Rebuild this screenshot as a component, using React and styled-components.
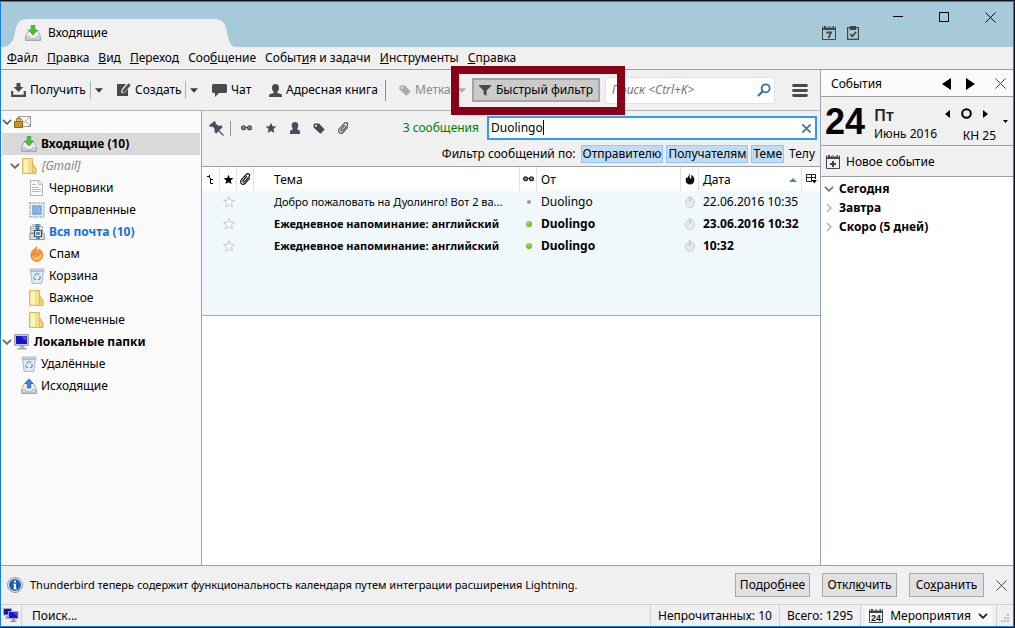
import React from "react";
import styled, { createGlobalStyle } from "styled-components";

const Global = createGlobalStyle`
  *, *::before, *::after { box-sizing: border-box; }
  body { margin: 0; background: #000; }
  body, button, input, select, table {
    font-family: "Noto Sans", "Open Sans", sans-serif;
    font-size: 12px;
    line-height: 16px;
    color: #000;
  }
  button { background: none; border: 0; padding: 0; margin: 0; cursor: default; white-space: nowrap; }
  svg { display: block; flex: none; }
  ul { list-style: none; margin: 0; padding: 0; }
  h2, p { margin: 0; font-size: inherit; font-weight: inherit; }
`;

/* ---------- window ---------- */
const Desktop = styled.div`
  min-height: 100vh;
  padding: 1px 1px 1px 0;
  display: flex;
  background: #14151a;
`;
const Window = styled.div`
  flex: 1;
  min-width: 0;
  display: flex;
  flex-direction: column;
  border: 1px solid #1a7fd6;
  background: #f0f0f0;
`;
const TitleBar = styled.header`
  display: flex;
  justify-content: space-between;
  align-items: flex-end;
  height: 45px;
  background: #a7cadb;
`;
const Tab = styled.div`
  position: relative;
  display: flex;
  width: 236px;
  height: 28px;
`;
const TabShape = styled.svg`
  position: absolute;
  inset: 0;
`;
const TabButton = styled.button`
  position: relative;
  display: flex;
  align-items: center;
  gap: 7px;
  padding: 0 24px;
`;
const TitleTools = styled.div`
  align-self: stretch;
  display: flex;
  align-items: flex-end;
  gap: 16px;
`;
const TabTools = styled.div`
  display: flex;
  gap: 11px;
  padding-bottom: 7px;
`;
const WindowControls = styled.div`
  align-self: flex-start;
  display: flex;
`;
const WindowControl = styled.button`
  width: 46px;
  height: 30px;
  display: flex;
  align-items: center;
  justify-content: center;
`;
const MenuBar = styled.nav`
  display: flex;
  gap: 9px;
  height: 23px;
  padding: 0 6px;
  align-items: center;
  border-bottom: 1px solid #9d9d9d;
`;

/* ---------- main split ---------- */
const Main = styled.div`
  flex: 1;
  display: flex;
`;
const MailArea = styled.div`
  flex: 1;
  min-width: 0;
  display: flex;
  flex-direction: column;
`;
const ToolBar = styled.div`
  display: flex;
  align-items: center;
  height: 41px;
  padding-left: 10px;
  padding-right: 12px;
  border-bottom: 1px solid #b4b4b4;
`;
const ToolButton = styled.button`
  flex: none;
  display: flex;
  align-items: center;
  gap: 4px;
  width: ${(p) => p.$width}px;
  color: ${(p) => (p.$dim ? "#8a8a8a" : "#000")};
`;
const DropButton = styled.button`
  flex: none;
  width: ${(p) => (p.$plain ? 19 : 27)}px;
  height: 18px;
  padding-left: 4px;
  border-left: 1px solid ${(p) => (p.$plain ? "transparent" : "#b0b0b0")};
`;
const ToolDivider = styled.span`
  flex: none;
  width: 1px;
  height: 21px;
  background: #8c8c8c;
  margin-right: 13px;
`;
const Highlight = styled.div`
  position: relative;
  flex: none;
  margin-right: 5px;
  &::after {
    content: "";
    position: absolute;
    z-index: 2;
    inset: -12px -25px -13px -21px;
    border: 8px solid #880015;
    pointer-events: none;
  }
`;
const QuickFilter = styled.button`
  display: flex;
  align-items: center;
  justify-content: center;
  gap: 5px;
  width: 128px;
  height: 24px;
  border: 2px solid #a5a5a5;
  background: #cbcbcb;
`;
const SearchBox = styled.label`
  flex: 1;
  min-width: 0;
  display: flex;
  align-items: center;
  height: 27px;
  padding: 0 3px 0 6px;
  background: #fff;
  border: 1px solid #e2e2e2;
`;
const SearchInput = styled.input`
  flex: 1;
  min-width: 0;
  border: 0;
  outline: 0;
  padding: 0;
  background: none;
  &::placeholder { color: #757575; font-style: italic; opacity: 1; }
`;
const MenuButton = styled.button`
  flex: none;
  margin-left: 17px;
`;
const Panes = styled.div`
  flex: 1;
  display: flex;
`;

/* ---------- folders ---------- */
const FolderPane = styled.aside`
  flex: none;
  width: 201px;
  border-right: 1px solid #98a6b8;
  background: #fafafa;
  padding: 0 1px;
`;
const FolderRow = styled.li`
  display: flex;
  align-items: center;
  height: 22px;
  padding-left: ${(p) => p.$indent}px;
  background: ${(p) => (p.$selected ? "#d9d9d9" : "none")};
`;
const Twisty = styled.span`
  width: 12px;
  display: flex;
`;
const FolderName = styled.span`
  margin-left: 4px;
  white-space: nowrap;
  font-weight: ${(p) => (p.$bold ? 700 : 400)};
  font-style: ${(p) => (p.$italic ? "italic" : "normal")};
  color: ${(p) => p.$color || "#000"};
`;

/* ---------- messages ---------- */
const MessagePane = styled.section`
  flex: 1;
  min-width: 0;
  display: flex;
  flex-direction: column;
  background: #fff;
`;
const FilterBar = styled.div`
  background: #f0f0f0;
  border-bottom: 1px solid #9d9d9d;
  padding: 4px 3px 0 7px;
  height: 56px;
`;
const FilterRow = styled.div`
  display: flex;
  align-items: center;
  height: 26px;
`;
const FilterIcons = styled.div`
  display: flex;
  align-items: center;
  gap: 13px;
  flex: 1;
`;
const FilterIcon = styled.button`
  display: flex;
`;
const FilterSeparator = styled.span`
  width: 1px;
  height: 15px;
  margin: 0 -3px 0 -7px;
  background: #999;
`;
const ResultCount = styled.span`
  color: #008000;
  margin-right: 8px;
`;
const FilterField = styled.div`
  position: relative;
  display: flex;
  align-items: center;
  width: 330px;
  height: 24px;
  border: 2px solid #3399ff;
  background: #fff;
  padding-right: 4px;
`;
const FilterInput = styled.input`
  flex: 1;
  min-width: 0;
  border: 0;
  outline: 0;
  padding: 0 0 0 2px;
  background: none;
`;
const Caret = styled.span`
  position: absolute;
  left: 54px;
  top: 2px;
  width: 1px;
  height: 15px;
  background: #000;
`;
const ScopeRow = styled.div`
  display: flex;
  align-items: center;
  justify-content: flex-end;
  gap: 3px;
  height: 26px;
`;
const ScopeLabel = styled.span`
  margin-right: 2px;
`;
const Scope = styled.button`
  height: 18px;
  line-height: 16px;
  padding: 0 1px;
  border: 1px solid ${(p) => (p.$on ? "#90c8f6" : "transparent")};
  background: ${(p) => (p.$on ? "#bfdcf3" : "none")};
`;
const ThreadList = styled.div`
  height: 149px;
  background: #f0f8fc;
  border-bottom: 1px solid #98b0c4;
`;
const Table = styled.table`
  width: 100%;
  table-layout: fixed;
  border-collapse: separate;
  border-spacing: 0;
`;
const Th = styled.th`
  height: 24px;
  padding: ${(p) => (p.$pad ? 2 : 0)}px 0 0 ${(p) => p.$pad || 0}px;
  text-align: left;
  font-weight: 400;
  background: #fff;
  border-right: ${(p) => (p.$last ? "0" : "1px solid #e2e2e2")};
`;
const IconCell = styled.span`
  display: flex;
  justify-content: center;
`;
const ThLabel = styled.span`
  display: flex;
  align-items: center;
  justify-content: space-between;
  padding-right: 4px;
`;
const Tr = styled.tr`
  font-weight: ${(p) => (p.$unread ? 700 : 400)};
`;
const Td = styled.td`
  height: 22px;
  padding: 0 0 0 ${(p) => p.$pad || 0}px;
  white-space: nowrap;
  font-size: ${(p) => (p.$small ? 11 : 12)}px;
`;
const Dot = styled.span`
  display: block;
  margin: 0 auto;
  width: ${(p) => (p.$unread ? 6 : 4)}px;
  height: ${(p) => (p.$unread ? 6 : 4)}px;
  border-radius: 50%;
  background: ${(p) => (p.$unread ? "radial-gradient(circle at 40% 30%, #a6e04a, #4fa40c)" : "#999")};
`;

/* ---------- calendar ---------- */
const EventsPane = styled.aside`
  flex: none;
  width: 193px;
  display: flex;
  flex-direction: column;
  border-left: 1px solid #98a6b8;
  background: #fff;
`;
const EventsHeader = styled.div`
  display: flex;
  align-items: center;
  height: 27px;
  padding: 1px 7px 0 10px;
  background: #fafafa;
  border-bottom: 1px solid #9d9d9d;
`;
const EventsTitle = styled.h2`
  flex: 1;
`;
const HeaderArrows = styled.div`
  display: flex;
  gap: 15px;
  margin-right: 20px;
`;
const DayBox = styled.div`
  display: flex;
  height: 49px;
  padding-left: 4px;
  background: #f0f0f0;
  border-bottom: 1px solid #9d9d9d;
`;
const DayNumber = styled.div`
  width: 49px;
  font: 700 36px/50px "Liberation Sans", Arial, sans-serif;
`;
const DayName = styled.div`
  flex: 1;
  padding-top: 7px;
`;
const Weekday = styled.div`
  font-size: 16px;
  font-weight: 600;
  line-height: 22px;
  color: #222;
`;
const DayNav = styled.div`
  display: flex;
  flex-direction: column;
  align-items: flex-end;
  width: 51px;
  padding-top: 11px;
  gap: 9px;
`;
const DayArrows = styled.div`
  align-self: flex-start;
  display: flex;
  align-items: center;
  gap: 11px;
`;
const MiniDrop = styled.button`
  align-self: center;
  margin: 0 5px 0 7px;
`;
const NewEvent = styled.button`
  display: flex;
  align-items: center;
  gap: 6px;
  height: 31px;
  padding: 1px 0 0 5px;
  background: #f0f0f0;
  border-bottom: 1px solid #9d9d9d;
`;
const Agenda = styled.ul`
  padding: 2px 3px;
`;
const AgendaItem = styled.li`
  display: flex;
  align-items: center;
  gap: 5px;
  height: 19px;
  font-weight: 700;
`;

/* ---------- bottom bars ---------- */
const Notice = styled.div`
  display: flex;
  align-items: center;
  height: 40px;
  padding: 0 6px;
  gap: 12px;
  border-top: 1px solid #9d9d9d;
  border-bottom: 1px solid #d2d2d2;
`;
const NoticeText = styled.p`
  flex: 1;
  margin-left: -5px;
  font-size: 11px;
`;
const NoticeButton = styled.button`
  height: 24px;
  width: 75px;
  border: 1px solid #a8a8a8;
  background: #e1e1e1;
`;
const StatusBar = styled.footer`
  display: flex;
  align-items: stretch;
  height: 21px;
`;
const StatusCell = styled.div`
  display: flex;
  align-items: center;
  padding: 0 ${(p) => p.$pad ?? 7}px;
  flex: ${(p) => (p.$grow ? 1 : "none")};
  border-right: ${(p) => (p.$last ? "0" : "1px solid #d2d2d2")};
`;
const TodayButton = styled.button`
  display: flex;
  align-items: center;
  gap: 7px;
  padding: 0 4px;
  height: 19px;
  background: #f8f8f8;
`;

/* ---------- icons ---------- */
const TrayIcon = ({ up }) => (
  <svg width="16" height="16" viewBox="0 0 16 16">
    <path d="M3.500 5.500h9l3 6v4H.5v-4z" fill="#eef0f2" stroke="#a3a9af" />
    <path d="M1.500 11.500h3l1 2h5l1-2h3v3h-13z" fill="#cfd6dd" stroke="#a9b0b7" strokeWidth=".7" />
    {up ? (
      <path d="M8 .8l4 4.700h-2.300V10H6.300V5.500H4z" fill="#3f86dc" stroke="#1d5cae" strokeWidth=".7" />
    ) : (
      <path d="M6.200 .5h3.600v4.500h2.700L8 10 3.500 5h2.700z" fill="#4cc136" stroke="#2f9a20" strokeWidth=".7" />
    )}
  </svg>
);
const LockMail = () => (
  <svg width="17" height="14" viewBox="0 0 17 14">
    <path d="M4.500 1.500h12v10h-12z" fill="#fbfbfb" stroke="#9a9a9a" />
    <path d="M5 2l5.500 5L16 2M5 11l4-4.500M16 11l-4-4.500" fill="none" stroke="#9a9a9a" strokeWidth=".9" />
    <path d="M2.500 7V5.200a2 2 0 0 1 4 0V7" fill="none" stroke="#a07820" strokeWidth="1.300" />
    <path d="M.5 6.500h8v6h-8z" fill="#d19f35" stroke="#8b6414" />
    <path d="M1 8.500h7M1 10.500h7" stroke="#a67a20" strokeWidth=".7" />
  </svg>
);
const FolderIcon = () => (
  <svg width="16" height="16" viewBox="0 0 16 16">
    <path d="M8.500 8.500h2V5l2.500 4.500 1 .5v5.500H8.500z" fill="#eed26a" stroke="#d1ae45" strokeWidth=".9" />
    <path d="M.5.5h10v15H.5z" fill="#f6df8c" stroke="#dcbb5c" />
    <path d="M2 1.500h4v13H2z" fill="#fdf1bd" />
  </svg>
);
const DraftIcon = () => (
  <svg width="16" height="16" viewBox="0 0 16 16">
    <path d="M1.500.5h8l4 4v11h-12z" fill="#fafafa" stroke="#b3b3b3" />
    <path d="M9.500.5v4h4M3 4.500h4M3 7.500h7M3 9.500h9M3 11.500h9" fill="none" stroke="#b9b9b9" />
  </svg>
);
const StampIcon = () => (
  <svg width="16" height="16" viewBox="0 0 16 16">
    <path d="M1 1h14v14H1z" fill="#eef3f8" stroke="#8ba0b5" strokeWidth="1.500" strokeDasharray="1.200 1" />
    <path d="M3 3h10v10H3z" fill="#76aae6" />
    <path d="M3.500 3.500h9v9h-9z" fill="none" stroke="#8fb6e6" />
    <circle cx="8" cy="8" r="2.300" fill="none" stroke="#a5c9f2" strokeWidth=".8" />
    <path d="M10.300 6v3.500h1.200" fill="none" stroke="#a5c9f2" strokeWidth=".8" />
  </svg>
);
const AllMailIcon = () => (
  <svg width="16" height="16" viewBox="0 0 16 16">
    <path d="M1.500 2.500h12v8h-12zM3 .8h9" fill="#f2f2f2" stroke="#a6a6a6" />
    <path d="M2 4.500h4M2 6.500h4M2 8.500h4" stroke="#a6b0b8" />
    <path d="M.8 9.500h14.500v6H.8z" fill="#d5dadf" stroke="#909ba5" />
    <path d="M6.500 0h4v6h-4z" fill="#3b8fb8" />
    <path d="M5.500 6.500h7v6h-7z" fill="#f2f2f2" stroke="#3c4d5a" strokeWidth="1.200" />
    <path d="M7.500 8.500h3v2h-3z" fill="#8fa2b0" stroke="#3c4d5a" strokeWidth=".6" />
    <path d="M7 12.500h4v3H7z" fill="#4d9cc4" />
  </svg>
);
const SpamIcon = () => (
  <svg width="16" height="16" viewBox="0 0 16 16">
    <path d="M7.500.5c.5 2 0 3.500.8 5.500.3 1 1.200.8 1.200-.2V3c3.500 1 4.500 4.500 4.300 6.500-.3 3.500-3 6-6 6-3.300 0-5.800-2.500-6-5.700C1.600 6.500 3.500 4 5 3.200 6.500 2.300 7.300 1.500 7.500.5z" fill="#f09138" stroke="#dd7a25" strokeWidth=".6" />
    <path d="M3.500 9c.7 2 3.500 3 5.500 1.500s2.500-2.500 3.300-2.500c.5 3.500-1.300 6-4.500 6s-5-2.500-4.300-5z" fill="#fbc55f" />
  </svg>
);
const TrashIcon = () => (
  <svg width="16" height="16" viewBox="0 0 16 16">
    <path d="M1.500 3h13l-1.700 12.500H3.200z" fill="#e0eaf1" stroke="#a4b4c0" strokeWidth=".9" />
    <path d="M1 1h14v2.300H1z" fill="#c3d3de" stroke="#9db0bd" strokeWidth=".7" />
    <path d="M5.500 8l1.800-2.500h1.500L10 7M10.700 8.300l.6 1.700-1 1.500H8.700M7 11.500H5.600L4.700 10l.6-1" fill="none" stroke="#5c9fd6" strokeWidth="1.200" />
  </svg>
);
const MonitorIcon = () => (
  <svg width="16" height="16" viewBox="0 0 16 16">
    <path d="M.5.5h14v11H.5z" fill="#c8c8c8" stroke="#a5a5a5" />
    <path d="M2 2h11v8H2z" fill="#1414c8" />
    <path d="M7 2.500h5.500v4.500z" fill="#4a5ae8" />
    <path d="M6 12h4v1.500H6zM3.500 13.800h9v1.700h-9z" fill="#a5a5a5" />
  </svg>
);
const TwoMonitors = () => (
  <svg width="16" height="15" viewBox="0 0 16 15">
    <path d="M.5.5h8v6.500h-8z" fill="#1414c8" stroke="#aaa" />
    <path d="M3 8h3v1.200H3zM2 9.500h4v1.200H2z" fill="#999" />
    <path d="M5.500 3.500h9.500v7H5.500z" fill="#1414d8" stroke="#aaa" />
    <path d="M9.500 4.200h4.500v3.200z" fill="#4a5ae8" />
    <path d="M9 11h3v1.500H9zM7.500 12.800h6V14h-6z" fill="#8d8d8d" />
  </svg>
);
const ChevronDown = ({ color = "#666" }) => (
  <svg width="10" height="6" viewBox="0 0 10 6">
    <path d="M1 .8l4 4 4-4" fill="none" stroke={color} strokeWidth="1.800" />
  </svg>
);
const ChevronRight = () => (
  <svg width="10" height="10" viewBox="0 0 10 10">
    <path d="M3 1l4 4-4 4" fill="none" stroke="#a8a8a8" strokeWidth="1.300" />
  </svg>
);
const DropArrow = ({ color = "#333b44" }) => (
  <svg width="8" height="5" viewBox="0 0 8 5"><path d="M0 .3h8L4 4.700z" fill={color} /></svg>
);
const GetIcon = () => (
  <svg width="15" height="14" viewBox="0 0 15 14">
    <path d="M5.500 0h4v4h3l-5 5-5-5h3z" fill="#4a4a4a" />
    <path d="M1.200 8v4.800h12.600V8" fill="none" stroke="#4a4a4a" strokeWidth="2.200" />
  </svg>
);
const WriteIcon = () => (
  <svg width="14" height="14" viewBox="0 0 14 14">
    <path d="M0 1h9L5 6 4 10l4-1 3-3.500V13H0z" fill="#4a4a4a" />
    <path d="M11.500 0L14 2.200 8 9l-3 1 .6-3z" fill="#4a4a4a" stroke="#f0f0f0" strokeWidth=".5" />
  </svg>
);
const ChatIcon = () => (
  <svg width="15" height="13" viewBox="0 0 15 13">
    <path d="M1.500 0h12A1.500 1.500 0 0 1 15 1.500v6A1.500 1.500 0 0 1 13.500 9H7l-4 4V9H1.500A1.500 1.500 0 0 1 0 7.500v-6A1.500 1.500 0 0 1 1.500 0z" fill="#4a4a4a" />
  </svg>
);
const PersonIcon = () => (
  <svg width="13" height="13" viewBox="0 0 13 13">
    <path d="M6.500 0C8.800 0 10 1.500 10 3.800c0 2-.8 3.400-1.700 4.200v1l3.700 1c.7.200 1 1 1 3H0c0-2 .3-2.800 1-3l3.700-1V8C3.800 7.200 3 5.800 3 3.800 3 1.500 4.200 0 6.500 0z" fill="#4a4a4a" />
  </svg>
);
const ContactIcon = () => (
  <svg width="10" height="12" viewBox="0 0 10 12">
    <path d="M5 0c2.200 0 3.300 1.300 3.300 3.300 0 1.500-.5 2.600-1 3.200v1l1.900.8c.6.300.8 1 .8 1.800V12H0v-1.900c0-.8.2-1.500.8-1.800l1.900-.8v-1c-.5-.6-1-1.700-1-3.200C1.700 1.300 2.800 0 5 0z" fill="#43505c" />
  </svg>
);
const TagIcon = ({ color = "#3e4a56" }) => (
  <svg width="12" height="11" viewBox="0 0 13 12">
    <path fillRule="evenodd" d="M1.500.5h5L12.700 7 8 11.700.5 5V1.500zM3.200 1.900a1.200 1.200 0 1 0 0 2.400 1.200 1.200 0 0 0 0-2.400z" fill={color} />
  </svg>
);
const FunnelIcon = () => (
  <svg width="12" height="11" viewBox="0 0 12 11"><path d="M0 0h12v1L7.500 5.500V11l-3-2V5.500L0 1z" fill="#4a4a4a" /></svg>
);
const MagnifierIcon = () => (
  <svg width="14" height="14" viewBox="0 0 14 14">
    <circle cx="8.700" cy="5.300" r="4" fill="none" stroke="#3a6fa5" strokeWidth="1.800" />
    <path d="M5.700 8.300L1 13" stroke="#3a6fa5" strokeWidth="2.200" />
  </svg>
);
const HamburgerIcon = () => (
  <svg width="16" height="13" viewBox="0 0 16 13">
    <path d="M1.500 1.500h13M1.500 6.500h13M1.500 11.500h13" stroke="#4a4a4a" strokeWidth="2.800" strokeLinecap="round" />
  </svg>
);
const PinIcon = () => (
  <svg width="15" height="15" viewBox="0 0 15 15">
    <path d="M0 4.500L5.500 0l1.300 1.500v1.200L9.500 4.700l3-.2 1 1.700L7.300 12.500 5.500 11l.2-2.800-2-2.700-2.200.5z" fill="#43505c" />
    <path d="M9.500 9.500l5 5" stroke="#43505c" strokeWidth="1.100" />
  </svg>
);
const GlassesIcon = ({ color = "#3e4a56" }) => (
  <svg width="11" height="6" viewBox="0 0 11 6">
    <path d="M4.500 2.500h2" stroke={color} />
    <circle cx="2.500" cy="2.800" r="1.900" fill="#8a949e" stroke={color} strokeWidth="1.300" />
    <circle cx="8.500" cy="2.800" r="1.900" fill="#8a949e" stroke={color} strokeWidth="1.300" />
  </svg>
);
const StarIcon = ({ fill = "#3e4a56", stroke = "none", size = 11 }) => (
  <svg width={size} height={size} viewBox="0 0 12 12">
    <path d="M6 .7l1.500 3.600 3.900.3-3 2.500 1 3.900L6 8.900l-3.400 2.100 1-3.900-3-2.500 3.900-.3z" fill={fill} stroke={stroke} strokeWidth=".9" />
  </svg>
);
const ClipIcon = ({ color = "#3e4a56" }) => (
  <svg width="11" height="12" viewBox="0 0 11 12">
    <path d="M6.800 3.200L3.200 7.300c-.9 1.300.6 2.300 1.500 1.300l4.500-5C10.700 1.500 8 -.3 6.300 1.300L1.500 6.500C-.8 9.800 2.500 12.600 5 10.500L10 5" fill="none" stroke={color} strokeWidth="1.100" />
  </svg>
);
const ThreadIcon = () => (
  <svg width="8" height="9" viewBox="0 0 8 9"><path d="M0 1.500h2.500M2.500 0v3M3.500 3v5.500H6M3.500 4.500H6" fill="none" stroke="#000" /></svg>
);
const FlameIcon = ({ pale }) => (
  <svg width="10" height="12" viewBox="0 0 10 12">
    {pale ? (
      <path d="M4.500.3v5c0 .8 1 .8 1 0V1C8.300 2 9.700 4.300 9.500 7 9.300 10 7.300 11.700 5 11.700S.7 10 .5 7.300C.3 5 1.800 3 3 2.300 3.800 1.800 4.300 1.300 4.500.3z" fill="#e6e9eb" stroke="#c3c6c8" strokeWidth=".8" />
    ) : (
      <path d="M4.500 0c.5 2-.2 3.500.3 5 .5 1 1.700.6 1.600-.6L6.200 1.800C8.500 3 9.500 5 9.300 7.500 9 10 7.200 11.500 5 11.500S1 10 .7 7.500C.6 6 1 5 1.700 4l1 1.500C2.500 3.500 4.300 2.500 4.500 0z" fill="#111" />
    )}
  </svg>
);
const PickerIcon = () => (
  <svg width="11" height="10" viewBox="0 0 11 10">
    <path d="M6 7.500H.5v-7h9V5M.5 3.500h9M5.500.5v7" fill="none" stroke="#222" />
    <path d="M5.800 6h5L8.300 9.500z" fill="#000" />
  </svg>
);
const CloseIcon = ({ size = 11, color = "#444", w = 1 }) => (
  <svg width={size} height={size} viewBox="0 0 11 11"><path d="M.5.5l10 10M10.500.5l-10 10" stroke={color} strokeWidth={w} /></svg>
);
const Triangle = ({ left, size = 10, width = 8 }) => (
  <svg width={width} height={size} viewBox="0 0 8 10" preserveAspectRatio="none"><path d={left ? "M8 0v10L0 5z" : "M0 0v10l8-5z"} /></svg>
);
const CalendarIcon = ({ mark, color = "#444" }) => (
  <svg width="14" height="14" viewBox="0 0 14 14">
    <path d="M.5 2.500v11h13v-11" fill="none" stroke={color} />
    <path d="M0 2h14v2H0zM0 .5h1V2H0zM2 0h2v2H2zM5 1h1v1H5zM6.500 0h1v2h-1zM8.500 1h1v1h-1zM10.500 0h1.500v2h-1.500zM13 .5h1V2h-1z" fill={color} />
    {mark === "plus" && <path d="M7 6v6M4 9h6" stroke={color} strokeWidth="2" />}
    {mark === "seven" && <path d="M4.300 6.500h4.700L6.500 12" fill="none" stroke={color} strokeWidth="1.800" />}
    {mark === "date" && (
      <text x="7" y="12" textAnchor="middle" fontSize="9" fontWeight="700" fontFamily="Liberation Sans, sans-serif" fill="#111">24</text>
    )}
  </svg>
);
const TasksIcon = () => (
  <svg width="12" height="14" viewBox="0 0 12 14">
    <path d="M3 1.600H.6v11.800h10.800V1.600H9" fill="none" stroke="#444" strokeWidth="1.200" />
    <path d="M3 0h6v4H3z" fill="#444" />
    <path d="M3.300 8l2 2.300L9 6" fill="none" stroke="#444" strokeWidth="1.800" />
  </svg>
);
const InfoIcon = () => (
  <svg width="16" height="16" viewBox="0 0 16 16">
    <circle cx="8" cy="8" r="7.500" fill="#e9edf2" stroke="#8b97a5" />
    <circle cx="8" cy="8" r="6" fill="#1f5fb8" />
    <path d="M7 3.500h2v2H7zM6.300 6.800H9v4.400h.8v1H6.300v-1H7V7.800h-.7z" fill="#fff" />
  </svg>
);
const Grip = () => (
  <svg width="8" height="12" viewBox="0 0 8 12">
    <path d="M6 4h2v2H6zM3 7h2v2H3zM6 7h2v2H6zM0 10h2v2H0zM3 10h2v2H3zM6 10h2v2H6z" fill="#bbb" />
  </svg>
);

/* ---------- data ---------- */
const MENUS = [
  ["", "Ф", "айл"], ["", "П", "равка"], ["", "В", "ид"], ["", "П", "ереход"],
  ["Соо", "б", "щение"], ["Событ", "и", "я и задачи"], ["", "И", "нструменты"], ["", "С", "правка"],
];
const NOTICE_ACTIONS = [["Подро", "б", "нее"], ["Откл", "ю", "чить"], ["Со", "х", "ранить"]];
const FOLDERS = [
  { indent: 0, open: true, icon: <LockMail />, name: "" },
  { indent: 19, icon: <TrayIcon />, name: "Входящие (10)", bold: true, selected: true },
  { indent: 8, open: true, icon: <FolderIcon />, name: "[Gmail]", italic: true, color: "#858585" },
  { indent: 27, icon: <DraftIcon />, name: "Черновики" },
  { indent: 27, icon: <StampIcon />, name: "Отправленные" },
  { indent: 27, icon: <AllMailIcon />, name: "Вся почта (10)", bold: true, color: "#1470d8" },
  { indent: 27, icon: <SpamIcon />, name: "Спам" },
  { indent: 27, icon: <TrashIcon />, name: "Корзина" },
  { indent: 27, icon: <FolderIcon />, name: "Важное" },
  { indent: 27, icon: <FolderIcon />, name: "Помеченные" },
  { indent: 0, open: true, icon: <MonitorIcon />, name: "Локальные папки", bold: true },
  { indent: 19, icon: <TrashIcon />, name: "Удалённые" },
  { indent: 19, icon: <TrayIcon up />, name: "Исходящие" },
];
const MESSAGES = [
  { subject: "Добро пожаловать на Дуолинго! Вот 2 ва...", from: "Duolingo", date: "22.06.2016 10:35" },
  { subject: "Ежедневное напоминание: английский", from: "Duolingo", date: "23.06.2016 10:32", unread: true },
  { subject: "Ежедневное напоминание: английский", from: "Duolingo", date: "10:32", unread: true },
];
const COLUMNS = [18, 17, 17, "auto", 17, 144, 18, 103, 18];

const Mnemonic = ({ parts }) => <span>{parts[0]}<u>{parts[1]}</u>{parts[2]}</span>;

export default function App() {
  return (
    <>
      <Global />
      <Desktop>
        <Window>
          <TitleBar>
            <Tab>
              <TabShape width="236" height="28" viewBox="0 0 236 28">
                <path d="M0 28C8 28 12 24 14 14 15.500 4 18 0 28 0H212C222 0 224.500 4 226 14 228 24 230 28 236 28z" fill="#f0f0f0" />
              </TabShape>
              <TabButton><TrayIcon />Входящие</TabButton>
            </Tab>
            <TitleTools>
              <TabTools>
                <button aria-label="Календарь"><CalendarIcon mark="seven" /></button>
                <button aria-label="Задачи"><TasksIcon /></button>
              </TabTools>
              <WindowControls>
                <WindowControl aria-label="Свернуть"><svg width="10" height="10"><path d="M0 4.500h10" stroke="#000" /></svg></WindowControl>
                <WindowControl aria-label="Развернуть"><svg width="10" height="10"><path d="M.5.5h9v9h-9z" fill="none" stroke="#000" /></svg></WindowControl>
                <WindowControl aria-label="Закрыть окно"><CloseIcon color="#000" /></WindowControl>
              </WindowControls>
            </TitleTools>
          </TitleBar>
          <MenuBar>
            {MENUS.map((m) => <button key={m.join("")}><Mnemonic parts={m} /></button>)}
          </MenuBar>

          <Main>
            <MailArea>
              <ToolBar>
                <ToolButton $width={79}><GetIcon />Получить</ToolButton>
                <DropButton aria-label="Получить: ещё"><DropArrow /></DropButton>
                <ToolButton $width={68}><WriteIcon />Создать</ToolButton>
                <DropButton aria-label="Создать: ещё"><DropArrow /></DropButton>
                <ToolButton $width={57}><ChatIcon />Чат</ToolButton>
                <ToolButton $width={116}><PersonIcon />Адресная книга</ToolButton>
                <ToolDivider />
                <ToolButton $width={54} $dim><TagIcon color="#aaa" />Метка</ToolButton>
                <DropButton $plain aria-label="Метки"><DropArrow color="#aaa" /></DropButton>
                <Highlight>
                  <QuickFilter aria-pressed="true"><FunnelIcon />Быстрый фильтр</QuickFilter>
                </Highlight>
                <SearchBox>
                  <SearchInput aria-label="Поиск" placeholder="Поиск <Ctrl+K>" />
                  <MagnifierIcon />
                </SearchBox>
                <MenuButton aria-label="Меню"><HamburgerIcon /></MenuButton>
              </ToolBar>

              <Panes>
                <FolderPane>
                  <ul>
                    {FOLDERS.map((f, i) => (
                      <FolderRow key={i} $indent={f.indent} $selected={f.selected}>
                        {f.open && <Twisty><ChevronDown /></Twisty>}
                        {f.icon}
                        <FolderName $bold={f.bold} $italic={f.italic} $color={f.color}>{f.name}</FolderName>
                      </FolderRow>
                    ))}
                  </ul>
                </FolderPane>

                <MessagePane>
                  <FilterBar>
                    <FilterRow>
                      <FilterIcons>
                        <FilterIcon aria-label="Закрепить"><PinIcon /></FilterIcon>
                        <FilterSeparator />
                        <FilterIcon aria-label="Непрочитанные"><GlassesIcon /></FilterIcon>
                        <FilterIcon aria-label="Помеченные"><StarIcon size={12} /></FilterIcon>
                        <FilterIcon aria-label="Контакты"><ContactIcon /></FilterIcon>
                        <FilterIcon aria-label="Метки"><TagIcon /></FilterIcon>
                        <FilterIcon aria-label="Вложения"><ClipIcon /></FilterIcon>
                      </FilterIcons>
                      <ResultCount>3 сообщения</ResultCount>
                      <FilterField>
                        <FilterInput aria-label="Фильтр" defaultValue="Duolingo" />
                        <Caret />
                        <button aria-label="Очистить"><CloseIcon size={9} color="#3a6fa5" w={2} /></button>
                      </FilterField>
                    </FilterRow>
                    <ScopeRow>
                      <ScopeLabel>Фильтр сообщений по:</ScopeLabel>
                      <Scope $on>Отправителю</Scope>
                      <Scope $on>Получателям</Scope>
                      <Scope $on>Теме</Scope>
                      <Scope>Телу</Scope>
                    </ScopeRow>
                  </FilterBar>
                  <ThreadList>
                    <Table>
                      <colgroup>
                        {COLUMNS.map((width, i) => <col key={i} style={{ width }} />)}
                      </colgroup>
                      <thead>
                        <tr>
                          <Th><IconCell><ThreadIcon /></IconCell></Th>
                          <Th><IconCell><StarIcon fill="#000" /></IconCell></Th>
                          <Th><IconCell><ClipIcon color="#000" /></IconCell></Th>
                          <Th $pad={20}>Тема</Th>
                          <Th><IconCell><GlassesIcon color="#222" /></IconCell></Th>
                          <Th $pad={4}>От</Th>
                          <Th><IconCell><FlameIcon /></IconCell></Th>
                          <Th $pad={4}>
                            <ThLabel>Дата<svg width="8" height="4"><path d="M0 4l4-4 4 4z" fill="#4b88b8" /></svg></ThLabel>
                          </Th>
                          <Th $last><IconCell><PickerIcon /></IconCell></Th>
                        </tr>
                      </thead>
                      <tbody>
                        {MESSAGES.map((m, i) => (
                          <Tr key={i} $unread={m.unread}>
                            <Td />
                            <Td><IconCell><StarIcon fill="#fff" stroke="#c2c2c2" size={12} /></IconCell></Td>
                            <Td />
                            <Td $pad={20} $small>{m.subject}</Td>
                            <Td><Dot $unread={m.unread} /></Td>
                            <Td $pad={4}>{m.from}</Td>
                            <Td><IconCell><FlameIcon pale /></IconCell></Td>
                            <Td $pad={4}>{m.date}</Td>
                            <Td />
                          </Tr>
                        ))}
                      </tbody>
                    </Table>
                  </ThreadList>
                </MessagePane>
              </Panes>
            </MailArea>

            <EventsPane>
              <EventsHeader>
                <EventsTitle>События</EventsTitle>
                <HeaderArrows>
                  <button aria-label="Назад"><Triangle left size={12} width={9} /></button>
                  <button aria-label="Вперёд"><Triangle size={12} width={9} /></button>
                </HeaderArrows>
                <button aria-label="Закрыть панель"><CloseIcon /></button>
              </EventsHeader>
              <DayBox>
                <DayNumber>24</DayNumber>
                <DayName>
                  <Weekday>Пт</Weekday>
                  <div>Июнь 2016</div>
                </DayName>
                <DayNav>
                  <DayArrows>
                    <button aria-label="Предыдущий день"><Triangle left size={8} width={5} /></button>
                    <button aria-label="Сегодня"><svg width="11" height="11"><circle cx="5.500" cy="5.500" r="4.300" fill="none" stroke="#000" strokeWidth="2" /></svg></button>
                    <button aria-label="Следующий день"><Triangle size={8} width={5} /></button>
                  </DayArrows>
                  <div>КН 25</div>
                </DayNav>
                <MiniDrop aria-label="Месяц"><svg width="5" height="3"><path d="M0 0h5L2.500 3z" /></svg></MiniDrop>
              </DayBox>
              <NewEvent><CalendarIcon mark="plus" />Новое событие</NewEvent>
              <Agenda>
                <AgendaItem><ChevronDown color="#777" />Сегодня</AgendaItem>
                <AgendaItem><ChevronRight />Завтра</AgendaItem>
                <AgendaItem><ChevronRight />Скоро (5 дней)</AgendaItem>
              </Agenda>
            </EventsPane>
          </Main>

          <Notice>
            <InfoIcon />
            <NoticeText>Thunderbird теперь содержит функциональность календаря путем интеграции расширения Lightning.</NoticeText>
            {NOTICE_ACTIONS.map((a) => <NoticeButton key={a.join("")}><Mnemonic parts={a} /></NoticeButton>)}
            <button aria-label="Закрыть уведомление"><CloseIcon /></button>
          </Notice>
          <StatusBar>
            <StatusCell $pad={2}><TwoMonitors /></StatusCell>
            <StatusCell $grow $pad={10}>Поиск...</StatusCell>
            <StatusCell>Непрочитанных: 10</StatusCell>
            <StatusCell>Всего: 1295</StatusCell>
            <StatusCell $pad={4}>
              <TodayButton><CalendarIcon mark="date" />Мероприятия<ChevronDown color="#222" /></TodayButton>
            </StatusCell>
            <StatusCell $pad={4} $last><Grip /></StatusCell>
          </StatusBar>
        </Window>
      </Desktop>
    </>
  );
}
